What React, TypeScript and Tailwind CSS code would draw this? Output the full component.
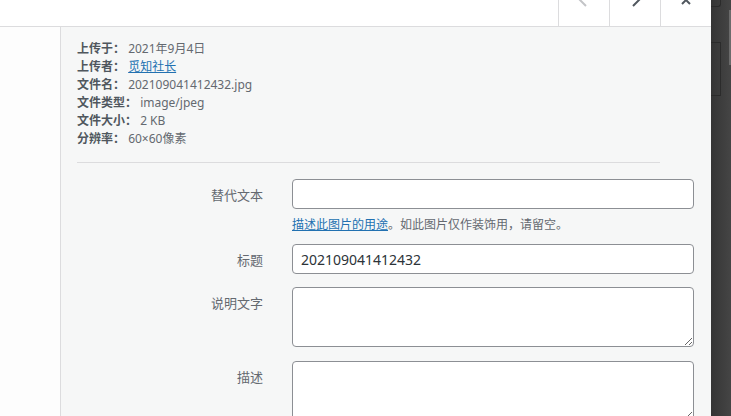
const details = [
  { label: '上传于：', value: '2021年9月4日' },
  { label: '上传者：', value: '觅知社长', link: true },
  { label: '文件名：', value: '202109041412432.jpg' },
  { label: '文件类型：', value: 'image/jpeg' },
  { label: '文件大小：', value: '2 KB' },
  { label: '分辨率：', value: '60×60像素' },
]

function NavButton({ children }: { children: React.ReactNode }) {
  return (
    <button className="flex h-full w-[51px] items-center justify-center border-l border-[#dcdcde] bg-white">
      {children}
    </button>
  )
}

function FieldRow({ label, children }: { label: string; children: React.ReactNode }) {
  return (
    <div className="flex gap-[29px]">
      <label className="w-[186px] shrink-0 pt-[7px] text-right text-[13px] leading-[18px] text-[#646970]">{label}</label>
      <div className="flex-1">{children}</div>
    </div>
  )
}

export default function App() {
  return (
    <div className="flex h-[416px] w-[731px] overflow-hidden font-['Noto_Sans','Noto_Sans_CJK_SC',sans-serif]">
      <div className="flex w-[711px] shrink-0 flex-col bg-white">
        {/* Header (scrolled: only its lower part shows) */}
        <div className="-mt-[24px] flex h-[51px] shrink-0 justify-end border-b border-[#dcdcde] bg-white">
          <NavButton>
            <svg className="-mt-[2px] h-5 w-5" viewBox="0 0 20 20" fill="none" stroke="#c3c4c7" strokeWidth={2}>
              <path d="M12 4l-6 6 6 6" />
            </svg>
          </NavButton>
          <NavButton>
            <svg className="-mt-[2px] h-5 w-5" viewBox="0 0 20 20" fill="none" stroke="#50575e" strokeWidth={2}>
              <path d="M8 4l6 6-6 6" />
            </svg>
          </NavButton>
          <NavButton>
            <svg className="-mt-[2px] h-5 w-5" viewBox="0 0 20 20" fill="none" stroke="#50575e" strokeWidth={2}>
              <path d="M6 6l8 8M14 6l-8 8" />
            </svg>
          </NavButton>
        </div>

        <div className="flex min-h-0 flex-1">
          <div className="w-[61px] shrink-0 border-r border-[#dcdcde] bg-[#fdfdfd]"></div>

          <div className="flex-1 bg-[#f6f7f7] pt-[13px] pr-[17px] pl-[16px]">
            {/* Attachment details */}
            <div className="mr-[34px] border-b border-[#dcdcde] pb-[14px] text-[12px] leading-[18px]">
              {details.map((d) => (
                <div key={d.label} className="whitespace-nowrap">
                  <strong className="font-semibold text-[#50575e]">{d.label}</strong>{' '}
                  {d.link ? (
                    <a href="#" className="text-[#2271b1] underline">
                      {d.value}
                    </a>
                  ) : (
                    <span className="text-[#646970]">{d.value}</span>
                  )}
                </div>
              ))}
            </div>

            {/* Settings */}
            <div className="pt-[16px]">
              <FieldRow label="替代文本">
                <input
                  type="text"
                  className="h-[30px] w-full rounded-[4px] border border-[#8c8f94] bg-white px-2 text-[14px] text-[#2c3338] outline-none"
                />
                <p className="mt-[7px] text-[12px] leading-[18px] text-[#646970]">
                  <a href="#" className="text-[#2271b1] underline">
                    描述此图片的用途
                  </a>
                  。如此图片仅作装饰用，请留空。
                </p>
              </FieldRow>

              <div className="mt-[10px]">
                <FieldRow label="标题">
                  <input
                    type="text"
                    defaultValue="202109041412432"
                    className="h-[30px] w-full rounded-[4px] border border-[#8c8f94] bg-white px-2 text-[14px] text-[#2c3338] outline-none"
                  />
                </FieldRow>
              </div>

              <div className="mt-[13px]">
                <FieldRow label="说明文字">
                  <textarea className="block h-[60px] w-full rounded-[4px] border border-[#8c8f94] bg-white px-2 text-[14px] text-[#2c3338] outline-none"></textarea>
                </FieldRow>
              </div>

              <div className="mt-[14px]">
                <FieldRow label="描述">
                  <textarea className="block h-[60px] w-full rounded-[4px] border border-[#8c8f94] bg-white px-2 text-[14px] text-[#2c3338] outline-none"></textarea>
                </FieldRow>
              </div>
            </div>
          </div>
        </div>
      </div>

      {/* Dimmed backdrop showing the page behind */}
      <div className="relative flex-1 bg-gradient-to-r from-[#353535] to-[#454545]">
        <div className="h-[7px] w-[10px] rounded-br-[3px] border-r border-b border-[#2b2b2b]"></div>
        <div className="mt-[35px] h-[54px] w-[10px] border-y border-r border-[#2b2b2b]"></div>
        <div className="absolute top-[10px] right-0 h-[55px] w-[2px] bg-[#6b6b6b]"></div>
      </div>
    </div>
  )
}
